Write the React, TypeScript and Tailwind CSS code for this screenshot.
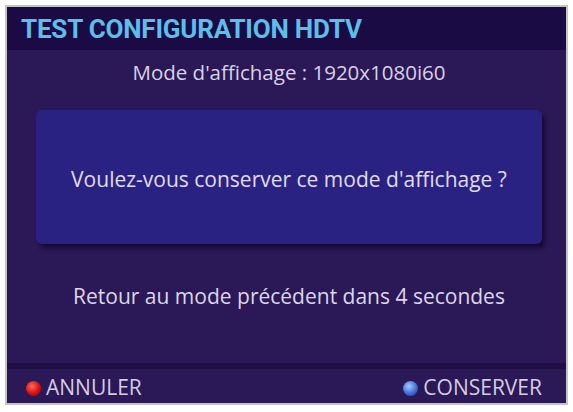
export default function App() {
  return (
    <div className="h-[412px] w-[573px] bg-white p-[5px] font-['Open_Sans',sans-serif]">
      <div className="flex h-[400px] w-[563px] flex-col border-2 border-[#c4c4c8] bg-[#2b1957]">
        {/* Header */}
        <div className="flex h-[43px] items-center bg-[#1a0b44] pl-[14px] pt-[2px]">
          <h1 className="font-['Roboto',sans-serif] text-[26px] font-bold tracking-[-0.2px] text-[#5cbfe9]">
            TEST CONFIGURATION HDTV
          </h1>
        </div>

        {/* Body */}
        <div className="flex flex-1 flex-col items-center pl-[5px]">
          <p className="mt-[7px] text-[20.5px] text-[#d9d2e6]">Mode d'affichage : 1920x1080i60</p>

          <div className="mt-[22px] flex h-[134px] w-[506px] items-center justify-center rounded-md bg-[#2a2283] pt-[6px] shadow-[3px_4px_4px_#150a35]">
            <p className="text-[21px] text-[#e1dcee]">Voulez-vous conserver ce mode d'affichage ?</p>
          </div>

          <p className="mt-[37px] text-[21px] text-[#ddd6ea]">Retour au mode précédent dans 4 secondes</p>
        </div>

        {/* Footer */}
        <div className="flex h-[40px] items-center justify-between border-t-[6px] border-[#1e0f45] bg-[#2a1857] pt-[4px] pl-[19px] pr-[24px]">
          <div className="flex items-center gap-[5px]">
            <span className="h-[15px] w-[15px] rounded-full bg-[radial-gradient(circle_at_40%_35%,#ff6a5a,#d80f0f_55%,#7a0505)]" />
            <span className="text-[21px] text-[#d4cde2]">ANNULER</span>
          </div>
          <div className="flex items-center gap-[5px]">
            <span className="h-[15px] w-[15px] rounded-full bg-[radial-gradient(circle_at_40%_35%,#a8c8ff,#3f6fd8_55%,#1b2f80)]" />
            <span className="text-[21px] text-[#d4cde2]">CONSERVER</span>
          </div>
        </div>
      </div>
    </div>
  );
}
